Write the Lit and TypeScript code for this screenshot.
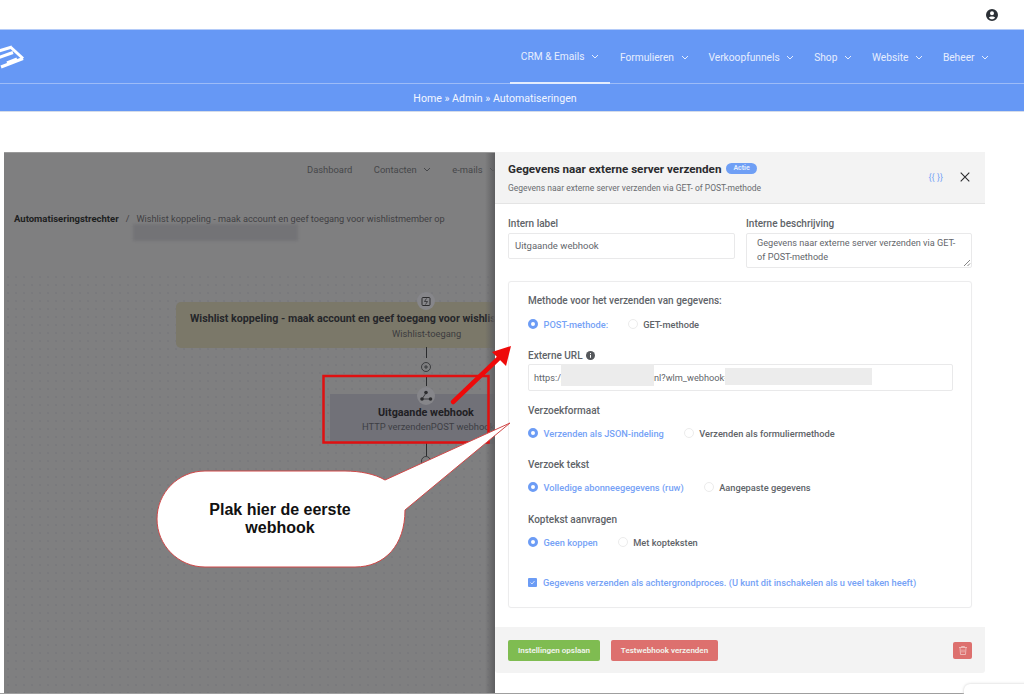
import { LitElement, html, css } from "lit";
import { customElement } from "lit/decorators.js";

const chev = html`<svg class="chev" viewBox="0 0 8 5" width="8" height="5"><path d="M1 1l3 3 3-3" fill="none" stroke="currentColor" stroke-width="1"/></svg>`;

const radios = (on: string, off: string, cls = "") => html`
  <div class="radios ${cls}">
    <span class="opt on"><i class="radio on"></i>${on}</span>
    <span class="opt"><i class="radio"></i>${off}</span>
  </div>`;

@customElement("app-root")
export class AppRoot extends LitElement {
  static styles = css`
    :host { display: block; width: 1024px; height: 694px; position: relative; overflow: hidden; background: #fff; font-family: Roboto, sans-serif; }
    .top { height: 29px; display: flex; justify-content: flex-end; align-items: center; padding-right: 26px; box-sizing: border-box; color: #2b3036; }
    .top svg { display: block; }
    .blue { background: #6698f5; color: #fff; border-top: 1px solid #b4cbf8; border-bottom: 1px solid #d5dce8; }
    .mainnav { height: 53px; display: flex; align-items: center; justify-content: space-between; border-bottom: 1px solid #9dbcf8; }
    .logo { display: block; }
    .items { display: flex; height: 100%; padding-right: 35px; gap: 20px; }
    .item { display: flex; align-items: center; gap: 6.5px; font-size: 10.2px; color: #e6eefe; height: 100%; box-sizing: border-box; white-space: nowrap; padding-top: 2px; }
    .item.active { width: 100px; border-bottom: 2px solid #e3ecfd; height: 54px; justify-content: center; margin-right: -10px; padding-top: 1px; }
    .crumbs { height: 27px; display: flex; align-items: center; justify-content: center; font-size: 10.6px; color: #f2f6ff; padding: 1px 34px 0 0; box-sizing: border-box; }
    .stage { position: absolute; left: 4px; top: 152px; width: 981px; height: 542px; display: flex; }
    .bg { width: 491px; height: 100%; background-color: #7f7f80; position: relative; color: #3a3b3e; font-size: 9.5px; border-top: 1px solid #9a9a9a; box-sizing: border-box; overflow: hidden; }
    .dots { position: absolute; left: 0; right: 0; top: 120px; bottom: 0; background-image: radial-gradient(#737478 0.6px, transparent 0.8px); background-size: 8px 8px; }
    .bg::after { content: ""; position: absolute; top: 0; bottom: 0; right: 0; width: 10px; background: linear-gradient(90deg, transparent, #5e5e60); }
    .bgnav { display: flex; gap: 21.5px; height: 33px; align-items: center; padding-left: 303px; white-space: nowrap; color: #46474a; font-size: 9.4px; position: relative; }
    .bgnav span { display: inline-flex; align-items: center; gap: 6px; }
    .bgcrumb { padding: 27px 0 0 10px; display: flex; gap: 7px; align-items: center; white-space: nowrap; color: #3f4043; font-size: 9.2px; position: relative; }
    .bgcrumb b { color: #1d1e20; font-weight: 700; font-size: 9.5px; }
    .smudge { position: absolute; left: 129px; top: 71px; width: 165px; height: 17px; background: #737376; filter: blur(1.5px); }
    .node { position: absolute; box-sizing: border-box; white-space: nowrap; }
    .n1 { left: 172px; top: 149px; width: 330px; height: 46px; background: #7b7869; border-radius: 5px; overflow: hidden; }
    .n1 b { position: absolute; left: 14px; top: 10px; font-size: 10.7px; color: #25262a; }
    .n1 span { position: absolute; left: 216px; top: 26px; font-size: 9.3px; color: #3b3c3f; }
    .n2 { left: 326px; top: 241px; width: 165px; height: 50px; background: #717178; }
    .n2 b { position: absolute; left: 48px; top: 12px; font-size: 10.8px; color: #1f2024; }
    .n2 span { position: absolute; left: 32px; top: 27px; font-size: 9.4px; color: #3d3e44; }
    .conn { position: absolute; left: 421.5px; width: 1px; background: #2a2b2d; }
    .c1 { top: 194px; height: 11px; }
    .c2 { top: 223px; height: 10px; }
    .c3 { top: 289px; height: 14px; }
    .panel { width: 490px; height: 100%; background: #fff; display: flex; flex-direction: column; color: #5d6066; font-size: 9.5px; }
    .phead { height: 52px; background: #f3f3f3; border-bottom: 1px solid #e4e4e4; padding: 9px 13px 0; box-sizing: border-box; display: flex; justify-content: space-between; }
    .ptitle { font-weight: 700; font-size: 11.65px; color: #2b2b2e; display: flex; align-items: center; gap: 5px; height: 15px; white-space: nowrap; }
    .badge { background: #6f9ff5; color: #e6efff; font-size: 7px; font-weight: 600; border-radius: 7px; padding: 0 7px; height: 11px; line-height: 11px; }
    .psub { font-size: 8.5px; color: #6a6c70; margin-top: 7px; white-space: nowrap; }
    .ptools { display: flex; align-items: center; gap: 17px; padding: 3px 2px 0 0; height: 26px; }
    .curly { color: #7aa6f6; font-size: 9px; }
    .pbody { padding: 0 13px; flex: none; }
    .row2 { display: grid; grid-template-columns: 227px 226px; gap: 11px; margin-top: 12px; height: 65px; }
    label, .lab { display: block; font-size: 10px; font-weight: 500; color: #606368; line-height: 14px; white-space: nowrap; }
    label { padding-top: 1px; }
    .input { border: 1px solid #e9e9ea; border-radius: 2px; box-sizing: border-box; color: #63666b; margin-top: 2px; background: #fff; white-space: nowrap; }
    .i1 { height: 26px; line-height: 24px; padding-left: 6px; }
    .i2 { height: 35px; padding: 3px 10px; line-height: 13.5px; position: relative; white-space: normal; font-size: 9.15px; }
    .grip { position: absolute; right: 0; bottom: 0; }
    .card { border: 1px solid #ececed; border-radius: 3px; box-sizing: border-box; height: 327px; padding: 12px 19px 0; box-shadow: 0 0 1px #f2f2f2; }
    .radios { display: flex; gap: 20px; height: 16px; margin-top: 7px; align-items: center; white-space: nowrap; font-weight: 500; font-size: 9.25px; }
    .radios.first { margin-top: 8px; gap: 19.5px; }
    .opt { display: inline-flex; align-items: center; gap: 5.5px; color: #606368; }
    .opt.on { color: #76a2f6; }
    .radio { width: 10px; height: 10px; border-radius: 50%; border: 1px solid #ececec; background: #fff; box-sizing: border-box; display: block; }
    .radio.on { border: 3px solid #6c9cf5; }
    .url { position: relative; height: 27px; width: 425px; line-height: 26px; padding-left: 5px; margin-top: 1px; font-size: 9.2px; }
    .query { position: absolute; left: 125px; top: 0; }
    .mask { position: absolute; background: #ececec; filter: blur(0.4px); }
    .m1 { left: 32px; top: -1px; width: 93px; height: 22px; }
    .m2 { left: 196px; top: 3px; width: 147px; height: 17px; }
    .info { display: inline-block; vertical-align: -1px; margin-left: 1px; }
    .sec { margin-top: 13px; }
    .s16 { margin-top: 17px; }
    .s18 { margin-top: 18px; }
    .check { display: flex; align-items: center; gap: 6px; color: #76a2f6; font-weight: 500; font-size: 9.25px; margin-top: 27px; white-space: nowrap; }
    .box { width: 9px; height: 9px; background: #6c9cf5; border-radius: 1px; display: block; }
    .box svg { display: block; }
    .pfoot { margin-top: 19px; height: 46px; background: #f3f3f3; border-radius: 0 0 3px 3px; display: flex; align-items: center; padding: 1px 13px 0; box-sizing: border-box; gap: 11px; }
    .btn { height: 21px; border-radius: 2px; color: #f2f5ef; font-size: 8px; font-weight: 600; display: flex; align-items: center; justify-content: center; box-sizing: border-box; white-space: nowrap; }
    .green { background: #7fbc51; width: 92px; }
    .red { background: #dd706e; width: 107px; }
    .trash { background: #dd706e; width: 19px; height: 17px; margin-left: auto; border-radius: 2px; display: flex; align-items: center; justify-content: center; }
    .overlay { position: absolute; left: 0; top: 0; pointer-events: none; }
    .callout { position: absolute; left: 180px; top: 501px; width: 200px; text-align: center; font-family: "Liberation Sans", sans-serif; font-weight: 700; font-size: 16px; line-height: 18px; color: #111; }
    .corner { position: absolute; left: 964px; top: 684px; width: 80px; height: 20px; background: #fff; border-radius: 6px; box-shadow: 0 0 3px #ccc; }
    .bottomline { position: absolute; left: 0; right: 60px; bottom: 0; height: 1px; background: #9f9f9f; }
  `;

  render() {
    const nav = ["Formulieren", "Verkoopfunnels", "Shop", "Website", "Beheer"];
    return html`
      <div class="top">
        <svg width="12" height="12" viewBox="0 0 12 12"><path fill-rule="evenodd" fill="currentColor" d="M6 0a6 6 0 1 1 0 12A6 6 0 0 1 6 0zm0 2.200a2 2 0 1 0 0 4 2 2 0 0 0 0-4zM6 7.400c-1.400 0-2.600.5-3.200 1.300C3.500 9.600 4.700 10.200 6 10.200s2.500-.6 3.200-1.500C8.600 7.900 7.400 7.400 6 7.400z"/></svg>
      </div>
      <div class="blue">
        <div class="mainnav">
          <svg class="logo" width="26" height="26" viewBox="0 43.500 26 26"><g fill="none" stroke="#fff" stroke-width="3"><path d="M-1 50.500L12 46.500"/><path d="M11 47L23 58"/><path d="M23 58L1 66.500"/><path d="M-1 57L13 52"/><path d="M7 62.500L17 58.500"/></g></svg>
          <div class="items">
            <div class="item active">CRM &amp; Emails ${chev}</div>
            ${nav.map((n) => html`<div class="item">${n} ${chev}</div>`)}
          </div>
        </div>
        <div class="crumbs">Home » Admin » Automatiseringen</div>
      </div>

      <div class="stage">
        <div class="bg">
          <div class="dots"></div>
          <div class="bgnav">
            <span>Dashboard</span><span>Contacten ${chev}</span><span>e-mails ${chev}</span>
          </div>
          <div class="bgcrumb"><b>Automatiseringstrechter</b><span>/</span><span>Wishlist koppeling - maak account en geef toegang voor wishlistmember op</span></div>
          <div class="smudge"></div>
          <div class="node n1"><b>Wishlist koppeling - maak account en geef toegang voor wishlistmember op</b><span>Wishlist-toegang</span></div>
          <div class="node n2"><b>Uitgaande webhook</b><span>HTTP verzendenPOST webhook</span></div>
          <div class="conn c1"></div>
          <div class="conn c2"></div>
          <div class="conn c3"></div>
          <svg class="overlay" width="491" height="542">
            <circle cx="422" cy="148" r="9" fill="#86868a"/>
            <rect x="418" y="144.500" width="8" height="8" rx="1" fill="none" stroke="#2c2c2e"/>
            <path d="M422.500 145.500l-2 3h3l-2 3" fill="none" stroke="#2c2c2e" stroke-width="0.8"/>
            <circle cx="422" cy="214" r="4.500" fill="none" stroke="#2a2b2d" stroke-width="0.8"/><path d="M420 214h4M422 212v4" stroke="#2a2b2d" stroke-width="0.8"/>
            <circle cx="422" cy="243" r="9" fill="#86868a"/>
            <g fill="#2c2c2e"><circle cx="422" cy="239.500" r="1.800"/><circle cx="418" cy="246" r="1.800"/><circle cx="426.500" cy="246" r="1.800"/></g>
            <path d="M422 240l-4 6h8.500" fill="none" stroke="#2c2c2e" stroke-width="0.8"/>
            <circle cx="422" cy="308" r="4.500" fill="none" stroke="#2a2b2d" stroke-width="0.8"/>
          </svg>
        </div>
        <div class="panel">
          <div class="phead">
            <div>
              <div class="ptitle">Gegevens naar externe server verzenden <span class="badge">Actie</span></div>
              <div class="psub">Gegevens naar externe server verzenden via GET- of POST-methode</div>
            </div>
            <div class="ptools">
              <span class="curly">{{ }}</span>
              <svg width="10" height="10" viewBox="0 0 10 10"><path d="M.7.700l8.600 8.600M9.300.700L.7 9.300" stroke="#2b2b2e" stroke-width="1.100"/></svg>
            </div>
          </div>
          <div class="pbody">
            <div class="row2">
              <div><label>Intern label</label><div class="input i1">Uitgaande webhook</div></div>
              <div><label>Interne beschrijving</label>
                <div class="input i2">Gegevens naar externe server verzenden via GET- of POST-methode
                  <svg class="grip" width="8" height="8" viewBox="0 0 8 8"><path d="M1 7l6-6M4.500 7L7 4.500" stroke="#666" stroke-width="0.8"/></svg>
                </div>
              </div>
            </div>
            <div class="card">
              <div class="lab">Methode voor het verzenden van gegevens:</div>
              ${radios("POST-methode:", "GET-methode", "first")}
              <div class="lab s16">Externe URL
                <svg class="info" width="9" height="9" viewBox="0 0 9 9"><circle cx="4.500" cy="4.500" r="4.500" fill="#55585c"/><path d="M4.500 3.800v3M4.500 2v1" stroke="#fff"/></svg>
              </div>
              <div class="input url">https:/,<span class="mask m1"></span><span class="query">nl?wlm_webhook=</span><span class="mask m2"></span></div>
              <div class="lab sec">Verzoekformaat</div>
              ${radios("Verzenden als JSON-indeling", "Verzenden als formuliermethode")}
              <div class="lab s16">Verzoek tekst</div>
              ${radios("Volledige abonneegegevens (ruw)", "Aangepaste gegevens")}
              <div class="lab s18">Koptekst aanvragen</div>
              ${radios("Geen koppen", "Met kopteksten")}
              <div class="check"><i class="box"><svg width="9" height="9" viewBox="0 0 9 9"><path d="M2.500 4.500l1.500 1.500 2.500-3" fill="none" stroke="#dfe9fd" stroke-width="0.9"/></svg></i>Gegevens verzenden als achtergrondproces. (U kunt dit inschakelen als u veel taken heeft)</div>
            </div>
          </div>
          <div class="pfoot">
            <div class="btn green">Instellingen opslaan</div>
            <div class="btn red">Testwebhook verzenden</div>
            <div class="trash"><svg width="8" height="9" viewBox="0 0 8 9"><path d="M0 1.500h8M2.500 1.500V.5h3v1M1 1.500l.5 7h5l.5-7M3 3.500v3M5 3.500v3" fill="none" stroke="#f3c9c8" stroke-width="0.8"/></svg></div>
          </div>
        </div>
      </div>

      <div class="bottomline"></div>
      <div class="corner"></div>

      <svg class="overlay" width="1024" height="694">
        <rect x="323.500" y="376" width="165" height="66.500" fill="none" stroke="#e01010" stroke-width="2.500"/>
        <path d="M453 402L499 358" stroke="#ee0a0a" stroke-width="4.500" stroke-linecap="round"/>
        <path d="M511 346L506 366L492 352Z" fill="#ee0a0a"/>
        <path d="M205 471H345C360 471 375 474 385 480L510 423L405 510C405 545 385 567 355 567H205C178 567 157 545 157 519C157 493 178 471 205 471Z" fill="#fff" stroke="#d04848" stroke-width="1"/>
      </svg>
      <div class="callout">Plak hier de eerste<br />webhook</div>
    `;
  }
}
